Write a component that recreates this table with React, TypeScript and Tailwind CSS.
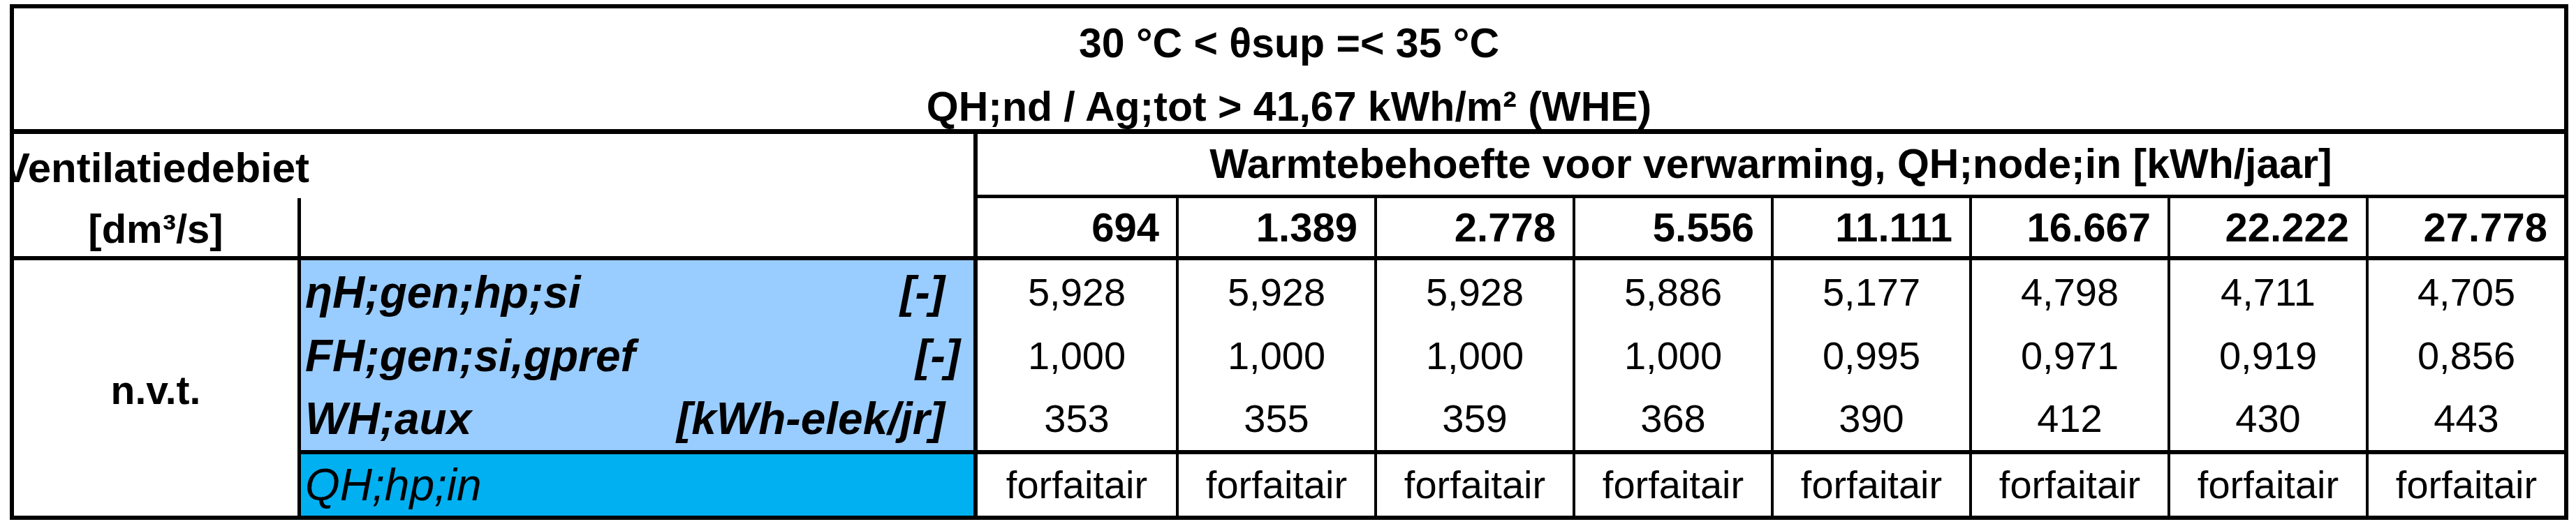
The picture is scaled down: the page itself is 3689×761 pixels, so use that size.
import React from 'react';

const headers = ['694', '1.389', '2.778', '5.556', '11.111', '16.667', '22.222', '27.778'];

const rows = [
  { label: 'ηH;gen;hp;si', unit: '[-]', pr: 'pr-[41px]', values: ['5,928', '5,928', '5,928', '5,886', '5,177', '4,798', '4,711', '4,705'] },
  { label: 'FH;gen;si,gpref', unit: '[-]', pr: 'pr-[19px]', values: ['1,000', '1,000', '1,000', '1,000', '0,995', '0,971', '0,919', '0,856'] },
  { label: 'WH;aux', unit: '[kWh-elek/jr]', pr: 'pr-[41px]', values: ['353', '355', '359', '368', '390', '412', '430', '443'] },
];

const App: React.FC = () => {
  return (
    <div className="w-[3689px] h-[761px] bg-white pt-[6px] pl-[14px] text-black font-['Liberation_Sans',Arial,sans-serif]">
      <div className="w-[3664px] h-[739px] border-[6px] border-black overflow-hidden">
        {/* titel */}
        <div className="h-[180px] border-b-[7px] border-black flex flex-col items-center pt-[20px] gap-[31px] font-bold text-[59px]">
          <div className="h-[60px] leading-[60px] whitespace-nowrap">30 °C &lt; θsup =&lt; 35 °C</div>
          <div className="h-[60px] leading-[60px] whitespace-nowrap">QH;nd / Ag;tot &gt; 41,67 kWh/m² (WHE)</div>
        </div>

        {/* kop */}
        <div className="grid grid-cols-[406px_974px_repeat(8,284px)] grid-rows-[92px_89px] font-bold">
          <div className="flex items-center justify-center whitespace-nowrap text-[60px] leading-none overflow-visible">
            <span className="pt-[6px]">Ventilatiedebiet</span>
          </div>
          <div className="border-r-[6px] border-black" />
          <div className="col-span-8 border-b-[5px] border-black flex items-center justify-center whitespace-nowrap text-[59px]">
            Warmtebehoefte voor verwarming, QH;node;in [kWh/jaar]
          </div>

          <div className="border-b-[6px] border-black flex items-center justify-center text-[58px] pt-[4px]">[dm³/s]</div>
          <div className="border-l-[5px] border-r-[6px] border-b-[6px] border-black" />
          {headers.map((h, i) => (
            <div
              key={h}
              className={`border-b-[6px] border-black flex items-center justify-end pr-[24px] text-[58px] ${i > 0 ? 'border-l-[4px]' : ''}`}
            >
              {h}
            </div>
          ))}
        </div>

        {/* gegevens */}
        <div className="grid grid-cols-[406px_974px_repeat(8,284px)] grid-rows-[91px_91px_90px_94px]">
          <div className="row-span-4 flex items-center justify-center font-bold text-[57px] pt-[8px]">n.v.t.</div>
          {rows.map((r) => (
            <React.Fragment key={r.label}>
              <div className={`border-l-[5px] border-r-[6px] border-black bg-[#99ccff] flex items-center justify-between pl-[6px] ${r.pr} font-bold italic text-[64px] whitespace-nowrap`}>
                <span>{r.label}</span>
                <span>{r.unit}</span>
              </div>
              {r.values.map((v, i) => (
                <div key={i} className={`border-black flex items-center justify-center text-[56px] ${i > 0 ? 'border-l-[4px]' : ''}`}>
                  {v}
                </div>
              ))}
            </React.Fragment>
          ))}
          <div className="border-l-[5px] border-r-[6px] border-t-[6px] border-black bg-[#00b0f0] flex items-center pl-[6px] italic text-[64px] whitespace-nowrap">
            QH;hp;in
          </div>
          {headers.map((h, i) => (
            <div key={h} className={`border-t-[6px] border-black flex items-center justify-center text-[56px] ${i > 0 ? 'border-l-[4px]' : ''}`}>
              forfaitair
            </div>
          ))}
        </div>
      </div>
    </div>
  );
};

export default App;
